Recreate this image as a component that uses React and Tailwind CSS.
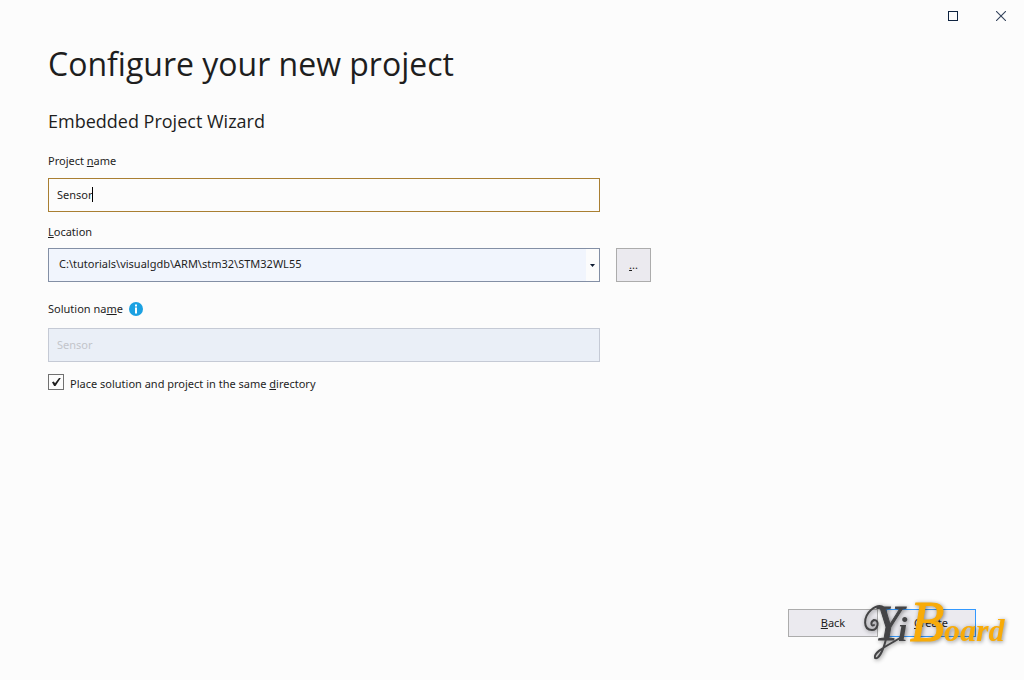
import React, { useState } from "react";

const fieldClass =
  "block w-full h-[34px] border pb-0.5 text-[11px] text-[#1e1e1e] outline-none rounded-none";
const labelClass = "block text-[11px] leading-[16px]";

function WindowButtons() {
  return (
    <div className="flex h-8 justify-end">
      <button
        type="button"
        aria-label="Maximize"
        className="flex w-12 items-center justify-center"
      >
        <svg width="10" height="10" viewBox="0 0 10 10" shapeRendering="crispEdges">
          <rect x="0.5" y="0.5" width="9" height="9" fill="none" stroke="#0e2340" />
        </svg>
      </button>
      <button
        type="button"
        aria-label="Close"
        className="flex w-[47px] items-center justify-center"
      >
        <svg width="10" height="10" viewBox="0 0 10 10">
          <path d="M0 0L10 10M10 0L0 10" stroke="#34435c" strokeWidth="1.1" />
        </svg>
      </button>
    </div>
  );
}

function Watermark() {
  return (
    <svg
      width="164"
      height="76"
      viewBox="0 0 164 76"
      className="pointer-events-none absolute right-0 bottom-2 font-['Liberation_Serif',serif] italic"
      style={{ filter: "drop-shadow(1px 1px 2px rgba(0,0,0,0.45))" }}
    >
      {/* curl and tail around the Y */}
      <path
        d="M14 29C11 31 10 26 14 24C20 24 18 34 12 34C3 34 3 21 11 14C16 10 21 9 24 12"
        fill="none"
        stroke="#444446"
        strokeWidth="2"
        strokeLinecap="round"
      />
      <path
        d="M26 43C23 56 18 64 15 62C13 56 27 50 40 42"
        fill="none"
        stroke="#444446"
        strokeWidth="2"
        strokeLinecap="round"
      />
      <text x="14" y="44" fill="#444446" fontSize="50" stroke="#444446">
        Y
      </text>
      <text x="38" y="45" fill="#444446" fontSize="34" fontWeight="bold">
        i
      </text>
      <text x="50" y="45" fill="#f8ab08" fontSize="56" stroke="#f8ab08">
        B
      </text>
      <text x="84" y="45" fill="#f8ab08" fontSize="32" fontWeight="bold">
        oard
      </text>
    </svg>
  );
}

function App() {
  const [projectName, setProjectName] = useState("Sensor");
  const [location, setLocation] = useState("C:\\tutorials\\visualgdb\\ARM\\stm32\\STM32WL55");
  const [sameDirectory, setSameDirectory] = useState(true);

  return (
    <div className="relative flex min-h-screen flex-col bg-[#fcfcfc] font-['Noto_Sans',sans-serif] text-[#1e1e1e]">
      <WindowButtons />

      <main className="px-12">
        <h1 className="mt-2 font-['Open_Sans',sans-serif] text-[32px] leading-[48px]">
          Configure your new project
        </h1>
        <h2 className="mt-5 font-['Open_Sans',sans-serif] text-[18px] leading-[26px]">
          Embedded Project Wizard
        </h2>

        <form className="mt-[19px] max-w-[603px]">
          <label htmlFor="project-name" className={labelClass}>
            Project <u>n</u>ame
          </label>
          <div className="relative mt-[9px] mr-[51px]">
            <input
              id="project-name"
              type="text"
              value={projectName}
              onChange={(e) => setProjectName(e.target.value)}
              className={`${fieldClass} border-[#a97f32] bg-[#fcfcfc] px-2`}
            />
            <span className="absolute top-[9px] left-11 h-[15px] w-px bg-black" />
          </div>

          <label htmlFor="location" className={`${labelClass} mt-3`}>
            <u>L</u>ocation
          </label>
          <div className="mt-2 flex gap-4">
            <div className="relative flex-1">
              <select
                id="location"
                value={location}
                onChange={(e) => setLocation(e.target.value)}
                className={`${fieldClass} appearance-none border-[#838fa5] bg-[#f1f5fd] pr-5 pl-[10px]`}
              >
                <option>{location}</option>
              </select>
              <span className="pointer-events-none absolute inset-y-px right-px flex w-[13px] items-center justify-center bg-[#fcfcfc]">
                <svg width="5" height="3" viewBox="0 0 5 3">
                  <path d="M0 0H5L2.5 3Z" fill="#0e1c33" />
                </svg>
              </span>
            </div>
            <button
              type="button"
              className="h-[34px] w-[35px] border border-[#acacac] bg-[#ebeaef] text-[11px]"
            >
              <u>.</u>..
            </button>
          </div>

          <div className="mt-[19px] flex items-center gap-[6px]">
            <label htmlFor="solution-name" className={labelClass}>
              Solution na<u>m</u>e
            </label>
            <svg width="14" height="14" viewBox="0 0 14 14">
              <circle cx="7" cy="7" r="7" fill="#1ba1e2" />
              <path d="M6 2.5h2v2H6zM6 5.5h2v6H6z" fill="#fff" />
            </svg>
          </div>
          <div className="mt-[11px] mr-[51px]">
            <input
              id="solution-name"
              type="text"
              disabled
              value={projectName}
              className={`${fieldClass} border-[#c5cad5] bg-[#eaeff7] px-2 text-[#c3c5ca]`}
            />
          </div>

          <div className="mt-3 flex items-start gap-[6px]">
            <span className="relative size-4">
              <input
                id="same-directory"
                type="checkbox"
                checked={sameDirectory}
                onChange={(e) => setSameDirectory(e.target.checked)}
                className="block size-4 appearance-none border border-[#717171] bg-[#fcfcfc]"
              />
              {sameDirectory && (
                <svg
                  width="16"
                  height="16"
                  viewBox="0 0 16 16"
                  className="pointer-events-none absolute inset-0"
                >
                  <path d="M4 8.2L5.8 7.5L7 9.3L11 4L12.8 4L7.5 12H6.1Z" fill="#1e1e1e" />
                </svg>
              )}
            </span>
            <label htmlFor="same-directory" className={`${labelClass} mt-0.5`}>
              Place solution and project in the same <u>d</u>irectory
            </label>
          </div>
        </form>
      </main>

      <footer className="mt-auto flex justify-end gap-2 px-12 pb-[43px]">
        <button
          type="button"
          className="h-7 w-[90px] border border-[#acacac] bg-[#ebeaef] text-[11px]"
        >
          <u>B</u>ack
        </button>
        <button
          type="button"
          className="h-7 w-[90px] border border-[#3399ff] bg-[#ebeaef] text-[11px]"
        >
          <u>C</u>reate
        </button>
      </footer>
      <Watermark />
    </div>
  );
}

export default App;
